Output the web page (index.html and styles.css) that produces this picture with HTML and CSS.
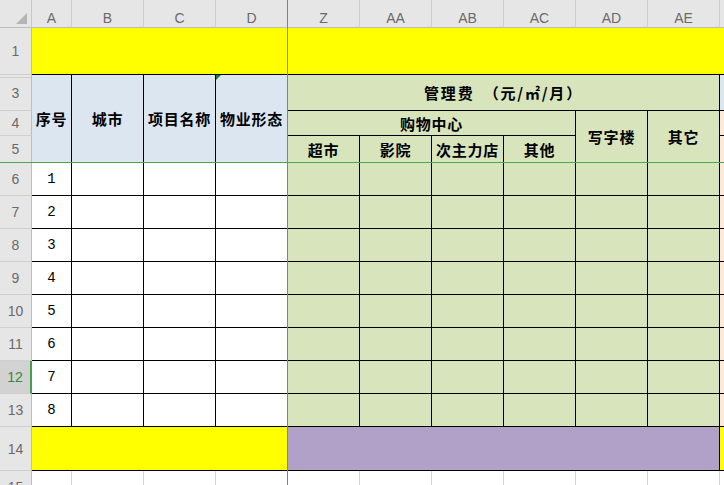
FILE: index.html
```html
<!DOCTYPE html>
<html lang="zh-CN">
<head>
<meta charset="utf-8">
<title>管理费</title>
<link rel="stylesheet" href="styles.css">
</head>
<body>
<div class="sheet">
  <div class="corner"></div>
  <div class="ch">A</div><div class="ch">B</div><div class="ch">C</div><div class="ch">D</div>
  <div class="ch">Z</div><div class="ch">AA</div><div class="ch">AB</div><div class="ch">AC</div><div class="ch">AD</div><div class="ch">AE</div><div class="ch"></div>

  <div class="rh">1</div>
  <div class="c k yl s4"></div>
  <div class="c k yl s7 open"></div>

  <div class="rh hid">3</div>
  <div class="c k bl hd r3">序号</div>
  <div class="c k bl hd r3">城市</div>
  <div class="c k bl hd r3">项目名称</div>
  <div class="c k bl hd r3 flag">物业形态</div>
  <div class="c k gr hd s6 title">管理费　（元/㎡/月）</div>
  <div class="c k bl"></div>

  <div class="rh">4</div>
  <div class="c k gr hd s4">购物中心</div>
  <div class="c k gr hd r2">写字楼</div>
  <div class="c k gr hd r2">其它</div>
  <div class="c k pe"></div>

  <div class="rh">5</div>
  <div class="c k gr hd">超市</div>
  <div class="c k gr hd">影院</div>
  <div class="c k gr hd">次主力店</div>
  <div class="c k gr hd">其他</div>
  <div class="c k pe"></div>

  <div class="rh">6</div><div class="c k num">1</div><div class="c k"></div><div class="c k"></div><div class="c k"></div>
  <div class="c k gr"></div><div class="c k gr"></div><div class="c k gr"></div><div class="c k gr"></div><div class="c k gr"></div><div class="c k gr"></div><div class="c k pe"></div>

  <div class="rh">7</div><div class="c k num">2</div><div class="c k"></div><div class="c k"></div><div class="c k"></div>
  <div class="c k gr"></div><div class="c k gr"></div><div class="c k gr"></div><div class="c k gr"></div><div class="c k gr"></div><div class="c k gr"></div><div class="c k pe"></div>

  <div class="rh">8</div><div class="c k num">3</div><div class="c k"></div><div class="c k"></div><div class="c k"></div>
  <div class="c k gr"></div><div class="c k gr"></div><div class="c k gr"></div><div class="c k gr"></div><div class="c k gr"></div><div class="c k gr"></div><div class="c k pe"></div>

  <div class="rh">9</div><div class="c k num">4</div><div class="c k"></div><div class="c k"></div><div class="c k"></div>
  <div class="c k gr"></div><div class="c k gr"></div><div class="c k gr"></div><div class="c k gr"></div><div class="c k gr"></div><div class="c k gr"></div><div class="c k pe"></div>

  <div class="rh">10</div><div class="c k num">5</div><div class="c k"></div><div class="c k"></div><div class="c k"></div>
  <div class="c k gr"></div><div class="c k gr"></div><div class="c k gr"></div><div class="c k gr"></div><div class="c k gr"></div><div class="c k gr"></div><div class="c k pe"></div>

  <div class="rh">11</div><div class="c k num">6</div><div class="c k"></div><div class="c k"></div><div class="c k"></div>
  <div class="c k gr"></div><div class="c k gr"></div><div class="c k gr"></div><div class="c k gr"></div><div class="c k gr"></div><div class="c k gr"></div><div class="c k pe"></div>

  <div class="rh sel">12</div><div class="c k num">7</div><div class="c k"></div><div class="c k"></div><div class="c k"></div>
  <div class="c k gr"></div><div class="c k gr"></div><div class="c k gr"></div><div class="c k gr"></div><div class="c k gr"></div><div class="c k gr"></div><div class="c k pe"></div>

  <div class="rh">13</div><div class="c k num">8</div><div class="c k"></div><div class="c k"></div><div class="c k"></div>
  <div class="c k gr"></div><div class="c k gr"></div><div class="c k gr"></div><div class="c k gr"></div><div class="c k gr"></div><div class="c k gr"></div><div class="c k pe"></div>

  <div class="rh">14</div>
  <div class="c k yl s4"></div>
  <div class="c k pu s6"></div>
  <div class="c k yl"></div>

  <div class="rh">15</div>
  <div class="c"></div><div class="c"></div><div class="c"></div><div class="c"></div>
  <div class="c"></div><div class="c"></div><div class="c"></div><div class="c"></div><div class="c"></div><div class="c"></div><div class="c"></div>

  <div class="freeze-v"></div>
  <div class="freeze-h"></div>
</div>
</body>
</html>
```

FILE: styles.css
```css
html, body {
  margin: 0;
  padding: 0;
  background: #ffffff;
  overflow: hidden;
}

.sheet {
  position: relative;
  display: grid;
  width: max-content;
  grid-template-columns: 32px 40px repeat(9, 72px) 40px;
  grid-template-rows: 28px 47px 36px 25px 27px repeat(8, 33px) 44px 33px;
  font-family: "Noto Sans CJK SC", "Noto Sans", sans-serif;
  color: #000;
}

.sheet > div {
  box-sizing: border-box;
}

.corner {
  position: relative;
  background: #e6e6e6;
  border-right: 1px solid #c8c8c8;
  border-bottom: 1px solid #bdbdbd;
}

.corner::after {
  content: "";
  position: absolute;
  right: 4px;
  bottom: 3px;
  width: 0;
  height: 0;
  border-left: 11px solid transparent;
  border-bottom: 11px solid #b4b4b4;
}

.ch {
  background: #e6e6e6;
  border-right: 1px solid #cfcfcf;
  border-bottom: 1px solid #bdbdbd;
  display: flex;
  align-items: center;
  justify-content: center;
  padding-top: 8px;
  font: 14px "Liberation Sans", Arial, sans-serif;
  color: #6a6a6a;
}

.rh {
  background: #e6e6e6;
  border-right: 1px solid #bdbdbd;
  border-bottom: 1px solid #cfcfcf;
  display: flex;
  align-items: center;
  justify-content: center;
  font: 14px "Liberation Sans", Arial, sans-serif;
  color: #6a6a6a;
}

.rh.hid {
  box-shadow: inset 0 2px 0 #e6e6e6, inset 0 3px 0 #cfcfcf;
}

.rh.sel {
  background: #d2d2d2;
  color: #2f8a3c;
  border-right: 2px solid #3fa24a;
}

.c {
  position: relative;
  border-right: 1px solid #d4d4d4;
  border-bottom: 1px solid #d4d4d4;
  display: flex;
  align-items: center;
  justify-content: center;
}

.k {
  border-right-color: #000;
  border-bottom-color: #000;
}

.open {
  border-right: none;
}

.hd {
  font-size: 15px;
  font-weight: 700;
  white-space: nowrap;
  letter-spacing: 0.8px;
}

.title {
  letter-spacing: 1.8px;
}

.num {
  font: 14px "Liberation Mono", "Courier New", monospace;
}

.yl { background: #ffff00; }
.bl { background: #dce6f1; }
.gr { background: #d8e4bc; }
.pe { background: #fde9d9; }
.pu { background: #b1a0c7; }

.s4 { grid-column: span 4; }
.s6 { grid-column: span 6; }
.s7 { grid-column: span 7; }
.r2 { grid-row: span 2; }
.r3 { grid-row: span 3; }

.flag::before {
  content: "";
  position: absolute;
  left: 0;
  top: 0;
  width: 0;
  height: 0;
  border-top: 5px solid #1d7a34;
  border-right: 5px solid transparent;
}

.freeze-v {
  position: absolute;
  left: 287px;
  top: 0;
  bottom: 0;
  width: 1px;
  background: #4ea64e;
}

.freeze-h {
  position: absolute;
  left: 0;
  right: 0;
  top: 162px;
  height: 1px;
  background: #4ea64e;
}
```
